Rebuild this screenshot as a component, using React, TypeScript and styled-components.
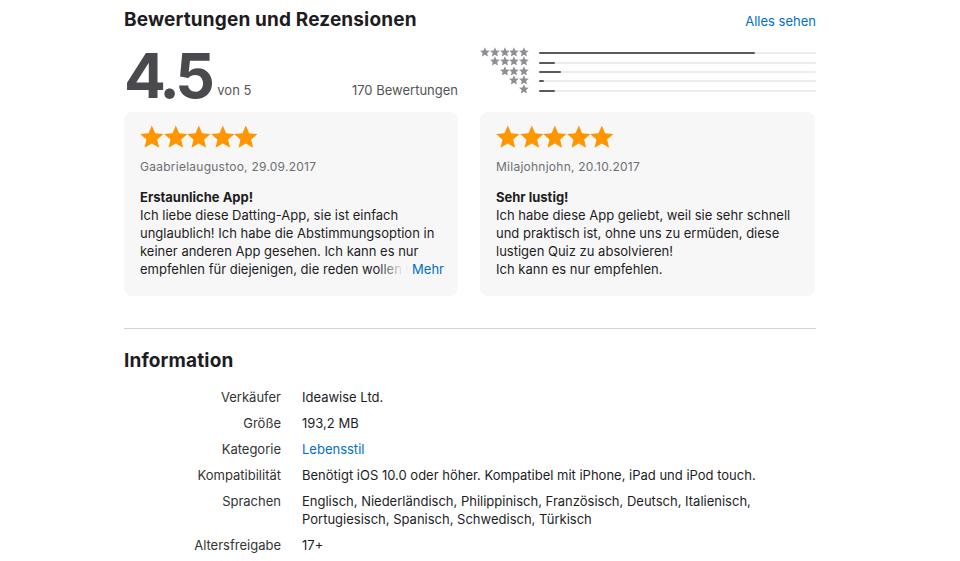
import React from 'react';
import styled, {createGlobalStyle} from "styled-components";

const GlobalStyle = createGlobalStyle`
  body {
    margin: 0;
    background: #fff;
    font-family: Inter, "Noto Sans", sans-serif;
    color: #1d1d1f;
    -webkit-font-smoothing: antialiased;
  }
`

const Page = styled.div`
  width: 692px;
  margin-left: 124px;
  padding-top: 8px;
`

const SectionHeader = styled.div`
  display: flex;
  justify-content: space-between;
  align-items: baseline;
`

const Heading = styled.h2`
  margin: 0;
  font-size: 19px;
  font-weight: 700;
  line-height: 24px;
  letter-spacing: 0.15px;
`

const Link = styled.a`
  color: #0070c9;
  font-size: 13px;
  text-decoration: none;
`

const Summary = styled.div`
  display: grid;
  grid-template-columns: 334px 1fr;
  column-gap: 22px;
  align-items: start;
  margin-top: 14px;
`

const Score = styled.div`
  display: flex;
  align-items: baseline;
  height: 66px;
`

const BigNumber = styled.div`
  font-size: 62px;
  font-weight: 700;
  line-height: 60px;
  color: #4a4a4e;
  letter-spacing: -4.5px;
`

const OutOf = styled.span`
  font-size: 13px;
  color: #555;
  margin-left: 7px;
  position: relative;
  top: -3px;
`

const Count = styled.span`
  margin-left: auto;
  font-size: 13px;
  color: #555;
  position: relative;
  top: -3px;
`

const Histogram = styled.div`
  display: grid;
  grid-template-columns: 49px 1fr;
  grid-auto-rows: 9.4px;
  column-gap: 10px;
  align-content: start;
  margin-top: 1px;
`

const SmallStars = styled.div`
  display: flex;
  justify-content: flex-end;
  align-items: center;
`

const Track = styled.div`
  align-self: center;
  margin-top: 3px;
  height: 2px;
  background: #ececf0;
  border-radius: 1px;
`

const Fill = styled.div`
  height: 100%;
  background: #5a5a5e;
  border-radius: 1px;
`

const Reviews = styled.div`
  display: grid;
  grid-template-columns: 334px 335px;
  column-gap: 22px;
`

const Card = styled.div`
  background: #f7f7f7;
  border-radius: 8px;
  height: 184px;
  padding: 12px 16px 0;
  box-sizing: border-box;
  font-size: 13px;
  line-height: 18px;
  color: #1d1d1f;
`

const BigStars = styled.div`
  display: flex;
  height: 26px;
  align-items: center;
`

const Meta = styled.div`
  margin-top: 8px;
  font-size: 12px;
  letter-spacing: 0.25px;
  color: #6e6e73;
`

const Title = styled.div`
  margin-top: 12px;
  font-weight: 700;
`

const Body = styled.div`
  height: 72px;
  position: relative;
  white-space: pre-line;
`

const More = styled.span`
  position: absolute;
  right: -2px;
  bottom: 0;
  padding-left: 34px;
  background: linear-gradient(to right, rgba(247,247,247,0), rgba(247,247,247,0.85) 22px, #f7f7f7 32px);
  color: #0070c9;
`

const Divider = styled.hr`
  border: none;
  border-top: 1px solid #d2d2d7;
  margin: 32px 0 0;
`

const InfoSection = styled.div`
  padding-top: 20px;
`

const InfoList = styled.dl`
  display: grid;
  grid-template-columns: 157px 1fr;
  column-gap: 21px;
  row-gap: 8px;
  margin: 15px 0 0;
  font-size: 13px;
  line-height: 18px;
`

const Label = styled.dt`
  text-align: right;
  color: #333;
`

const Value = styled.dd<{ $link?: boolean }>`
  margin: 0;
  color: ${p => p.$link ? "#0070c9" : "#1d1d1f"};
`

const Star: React.FC<{ size: number; color: string }> = ({size, color}) => (
  <svg width={size} height={size} viewBox="1 1.5 22 21">
    <path fill={color}
          d="M12 1.5l3.1 7.2 7.8.7-5.9 5.2 1.8 7.7L12 18.3l-6.8 4 1.8-7.7-5.9-5.2 7.8-.7z"/>
  </svg>
)

const histogram = [78, 5.8, 8, 1.8, 5.8]

const reviews = [
  {
    meta: "Gaabrielaugustoo, 29.09.2017",
    title: "Erstaunliche App!",
    body: "Ich liebe diese Datting-App, sie ist einfach unglaublich! Ich habe die Abstimmungsoption in keiner anderen App gesehen. Ich kann es nur empfehlen für diejenigen, die reden wollen u",
    more: true,
  },
  {
    meta: "Milajohnjohn, 20.10.2017",
    title: "Sehr lustig!",
    body: "Ich habe diese App geliebt, weil sie sehr schnell und praktisch ist, ohne uns zu ermüden, diese lustigen Quiz zu absolvieren!\nIch kann es nur empfehlen.",
    more: false,
  },
]

const info: { label: string; value: string; link?: boolean }[] = [
  {label: "Verkäufer", value: "Ideawise Ltd."},
  {label: "Größe", value: "193,2 MB"},
  {label: "Kategorie", value: "Lebensstil", link: true},
  {label: "Kompatibilität", value: "Benötigt iOS 10.0 oder höher. Kompatibel mit iPhone, iPad und iPod touch."},
  {label: "Sprachen", value: "Englisch, Niederländisch, Philippinisch, Französisch, Deutsch, Italienisch, Portugiesisch, Spanisch, Schwedisch, Türkisch"},
  {label: "Altersfreigabe", value: "17+"},
]

export default function App() {
  return (
    <>
      <GlobalStyle/>
      <Page>
        <SectionHeader>
          <Heading>Bewertungen und Rezensionen</Heading>
          <Link href="#">Alles sehen</Link>
        </SectionHeader>

        <Summary>
          <Score>
            <BigNumber>4.5</BigNumber>
            <OutOf>von 5</OutOf>
            <Count>170 Bewertungen</Count>
          </Score>
          <Histogram>
            {histogram.map((pct, i) => (
              <React.Fragment key={i}>
                <SmallStars>
                  {Array.from({length: 5 - i}).map((_, j) => (
                    <Star key={j} size={9.8} color="#8e8e93"/>
                  ))}
                </SmallStars>
                <Track>
                  <Fill style={{width: `${pct}%`}}/>
                </Track>
              </React.Fragment>
            ))}
          </Histogram>
        </Summary>

        <Reviews>
          {reviews.map(r => (
            <Card key={r.meta}>
              <BigStars>
                {Array.from({length: 5}).map((_, j) => (
                  <Star key={j} size={23.6} color="#ff9500"/>
                ))}
              </BigStars>
              <Meta>{r.meta}</Meta>
              <Title>{r.title}</Title>
              <Body>
                {r.body}
                {r.more && <More>Mehr</More>}
              </Body>
            </Card>
          ))}
        </Reviews>

        <Divider/>

        <InfoSection>
          <Heading>Information</Heading>
          <InfoList>
            {info.map(row => (
              <React.Fragment key={row.label}>
                <Label>{row.label}</Label>
                <Value $link={row.link}>{row.value}</Value>
              </React.Fragment>
            ))}
          </InfoList>
        </InfoSection>
      </Page>
    </>
  )
}
